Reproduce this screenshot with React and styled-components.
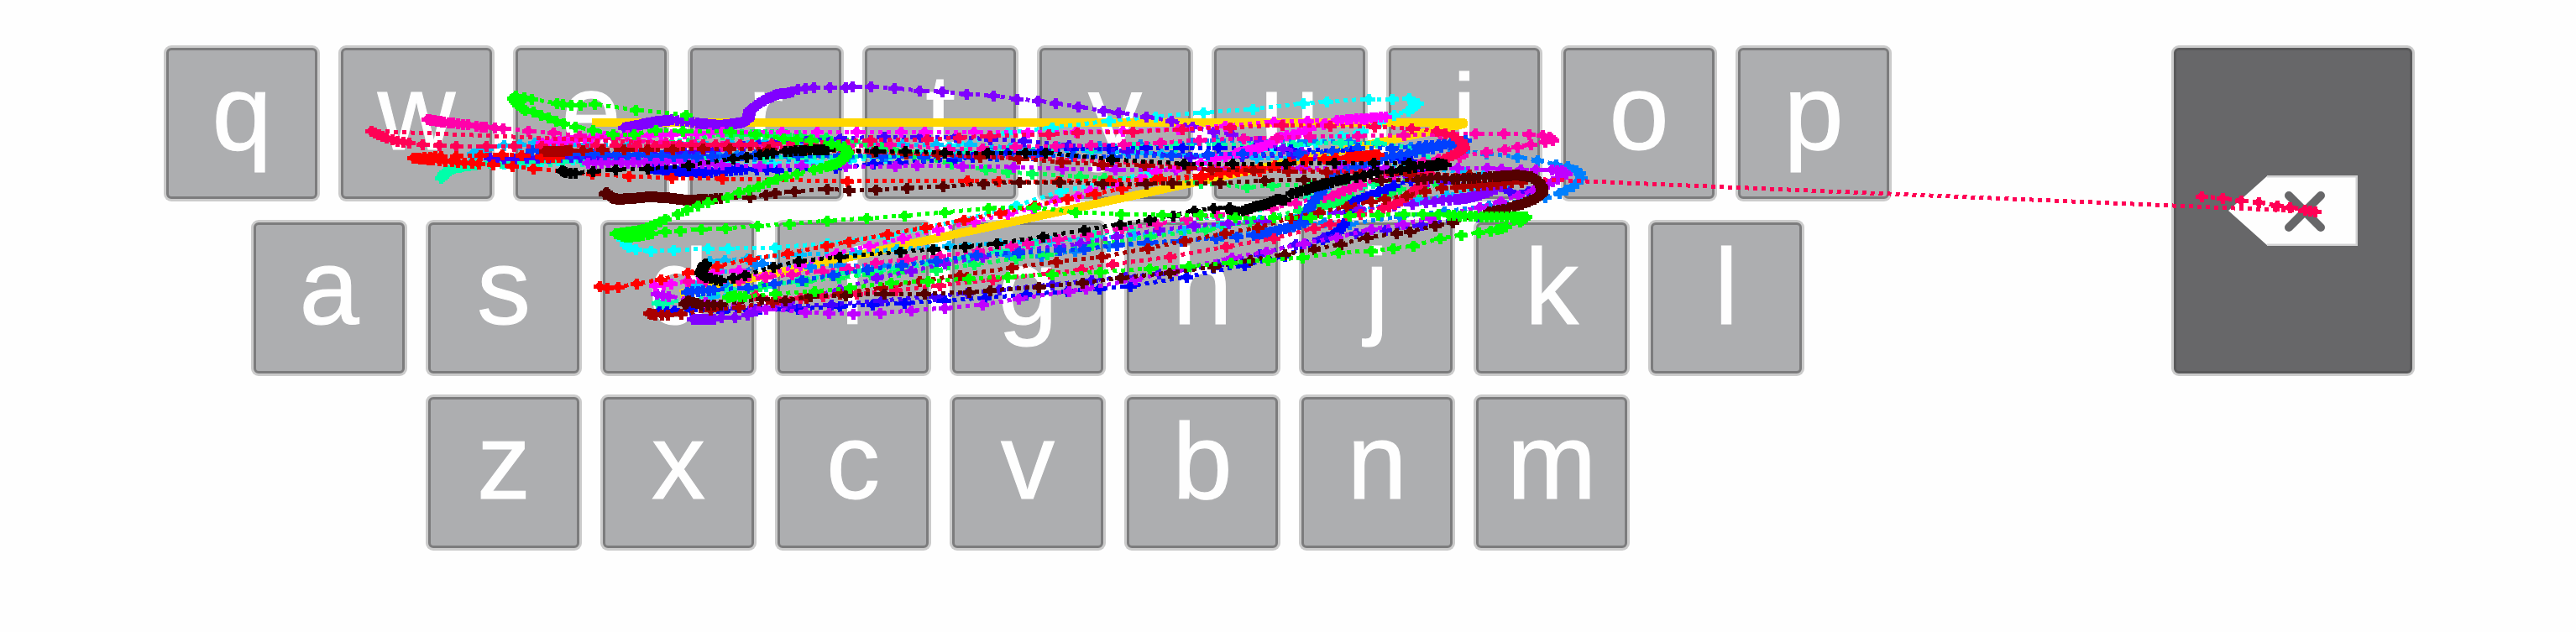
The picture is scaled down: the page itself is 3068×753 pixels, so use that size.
import React from "react";
import styled, { createGlobalStyle } from "styled-components";

const GlobalStyle = createGlobalStyle`
  *, *::before, *::after { box-sizing: border-box; }
  body { margin: 0; background: #fefefe; }
`;

const Board = styled.main`
  position: relative;
  display: flex;
  justify-content: space-between;
  align-items: flex-start;
  min-width: max-content;
  padding: 57px 195px 100px 198px;
  background: #fefefe;
`;

const Keys = styled.div`
  display: flex;
  flex-direction: column;
  gap: 28px;
`;

const Row = styled.div`
  display: flex;
  gap: 28px;
  padding-left: ${(p) => p.$indent}px;
`;

const Key = styled.button`
  display: flex;
  align-items: center;
  justify-content: center;
  width: ${(p) => (p.$tall ? 284 : 180)}px;
  height: ${(p) => (p.$tall ? 388 : 180)}px;
  padding: ${(p) => (p.$tall ? "0" : "0 0 26px")};
  border: 3px solid ${(p) => (p.$tall ? "#59595a" : "#7c7c7d")};
  border-radius: 6px;
  box-shadow: 0 0 0 3px #cbcbcb;
  background: ${(p) => (p.$tall ? "#676769" : "#adaeb0")};
  color: #fefefe;
  font: 128px/148px "Liberation Sans", Arial, sans-serif;
  -webkit-text-stroke: 1px #fefefe;
`;

const Traces = styled.svg`
  position: absolute;
  inset: 0;
  width: 100%;
  height: 100%;
  pointer-events: none;
`;

const BackspaceIcon = () => (
  <svg width="154" height="84" viewBox="0 0 154 84" aria-hidden="true">
    <path d="M0 42L47 0H154V84H47Z" fill="#fefefe" />
    <path d="M46 1H153V83H46" fill="none" stroke="#d2d2d3" strokeWidth="3" />
    <path d="M72 24L110 62M110 24L72 62" stroke="#676769" strokeWidth="10" strokeLinecap="round" />
  </svg>
);

const ROWS = [
  { indent: 0, letters: "qwertyuiop" },
  { indent: 104, letters: "asdfghjkl" },
  { indent: 312, letters: "zxcvbnm" },
];

// Each swipe is a list of touch samples. "x,y*n" adds n evenly spaced samples
// on the way to the point, "x,y!" is a jump without samples between.
const SWIPES = [
  ["#00ffff", "741,285 745,291 748,294 757,297 775,299 802,298 843,296 867,296 923,295 985,290 1057,281 1100,272 1148,262 1210,245 1263,228 1320,217 1370,205 1430,195 1480,184 1517,177 1547,172 1567,170 1597,162 1622,156 1643,145 1660,137 1677,132 1688,123*3 1678,117 1658,118 1630,118 1580,121 1552,123 1492,130 1433,134 1376,139 1321,144 1253,152 1200,158 1130,175 1055,188 968,193 920,195 860,195 760,186 700,189 627,193*4 600,195*3"],
  ["#00bfff", "868,352 848,353 830,340 858,323 845,311 863,310 890,308 953,303 1018,301 1068,297 1130,293 1190,290 1250,287 1350,280 1410,275 1500,262 1620,250 1690,238 1723,233 1760,225 1793,222 1767,208 1743,205 1580,190 1497,188 1383,183 1300,180 1250,179 1155,172 1075,172 1000,168 867,170 750,172 700,173 637,170*3 600,173*2 580,177 563,183*3 565,188"],
  ["#0080ff", "865,340 900,315 908,314 965,318 1000,316 1050,316 1110,311 1200,303 1240,305 1320,293 1410,287 1500,275 1577,265 1607,267 1667,258 1720,252 1773,245 1810,240 1840,235 1857,230 1873,222*2 1883,212*2 1881,206 1877,203 1867,198 1853,196 1831,191 1807,187 1770,183 1743,180 1680,175 1607,169 1557,168 1448,167 1420,170 1358,172 1260,175 1180,182 1100,185 1010,187 960,186 835,185*6 720,188*10 690,186*4"],
  ["#00ffaa", "783,361*2 795,360*2 820,357 870,345 912,341 950,335 1000,325 1067,320*3 1150,307 1230,290 1303,280 1345,272 1376,267 1450,258 1500,246 1560,235 1621,222 1635,218 1660,205 1700,190 1690,178 1640,170 1597,170 1540,172 1450,172 1350,175 1200,180 1050,186 950,187 870,188 760,190 670,192*4 610,193*4 570,195*3 550,198*5 540,200*3 530,205*4 525,212*3"],
  ["#00ff55", "900,345 910,338 960,335 1037,327 1070,324 1115,322 1160,315 1210,308 1247,303 1300,292 1369,282 1436,274 1488,264 1547,251 1570,245*2 1580,243*2 1600,238*4 1610,235*2 1640,231 1655,230 1667,225 1690,228 1715,218 1700,212 1640,216 1562,220 1515,221 1485,223 1430,218 1378,212 1315,212 1286,210 1229,207 1200,205 1174,202 1133,195 1100,188 1050,175*4 1000,165*3 935,160*4 895,160*5 860,160*3 800,170"],
  ["#0000ff", "785,371 803,370*2 823,369 860,371 905,368 950,368 1000,365 1077,361 1173,355 1271,347 1346,341 1413,330 1482,316 1530,305 1575,285 1593,276*3 1600,266*3 1606,252 1612,240*2 1633,232*4 1660,221*3 1680,215 1695,202 1680,192 1667,188*3 1657,187 1610,180 1537,178 1451,176 1365,176 1277,177 1200,182 1137,190*3 1070,194 1040,195 995,200 926,203 888,201*3 840,205*8 800,203*8 775,200*5"],
  ["#4000ff", "860,367 900,368 940,365 990,363 1050,358 1113,353 1190,345 1253,339 1300,334 1380,326 1450,315 1500,303 1543,291 1576,283 1615,278 1650,274 1693,268 1760,258 1810,243 1830,234 1820,228 1798,228 1780,225 1720,217 1640,202 1540,185 1417,187 1343,180 1273,173 1219,168 1138,163 1053,163 1000,165 920,170 850,178*4 780,185*6 680,187*9 600,189*6 583,188*2"],
  ["#8000ff", "825,380 850,380*8 859,378 875,378 890,375 900,370 935,362 1000,345 1044,331 1085,323 1125,314 1170,306 1213,299 1287,290 1330,282 1380,274 1422,269 1463,266 1505,263 1553,257 1593,253 1617,249 1660,245 1682,243 1698,241 1718,238*2 1733,237*2 1745,236*3 1762,232*4 1775,227*3 1787,222*2 1760,220 1700,216 1620,200 1550,181 1528,177 1500,168 1467,160 1445,157 1420,151 1395,144 1365,139 1332,134 1314,132 1284,127 1257,123 1236,120 1211,118 1183,114 1151,112 1122,109 1095,108 1065,105 1037,103 1015,103 1007,104 988,104 969,104 959,105 950,106 943,109 925,112*4 913,117*4 900,125*5 892,132*4 890,142*4 884,145*3 875,147*3 855,149*5 830,146*5 800,142*5 777,145*5 743,152*12"],
  ["#bf00ff", "782,350 796,353*2 820,356 840,360 880,365 912,368 959,372 987,373 1016,374 1048,373 1085,370 1125,367 1170,363 1213,356 1273,347 1293,344 1352,333 1400,322 1467,307 1508,300 1553,290 1592,283 1633,273 1671,267 1703,260 1762,247 1787,240 1808,233 1826,227 1843,219 1855,213*2 1865,207*2 1860,203*2 1848,202*2 1829,202 1811,202 1788,201 1771,200 1736,200 1650,200 1500,200 1400,202 1328,202 1265,201 1207,199 1146,198 1092,197 1066,198 1007,198 955,197 905,198 860,196 795,191*8 740,194*8 700,194*5"],
  ["#ff00ff", "780,340 799,338*2 818,335 850,325 880,322 910,329 996,302 1035,293 1075,284 1117,274 1160,264 1200,255 1230,248 1257,239 1283,234 1298,227 1330,220 1358,213 1376,204 1402,199 1430,194 1447,189 1459,187 1472,182 1487,179*3 1507,173*4 1525,163*3 1547,158*3 1560,153*2 1592,143*2 1650,139*10 1625,142 1592,143 1557,144 1517,145 1459,150 1403,154 1337,156 1224,158 1160,157 1101,157 1073,157 1020,157 973,157 931,157 860,157 800,160*4 720,162*6 680,167*5 645,170*5"],
  ["#ff00aa", "820,335 840,335 880,335 912,330 943,327 980,323 1010,320 1043,313 1080,309 1119,305 1165,299 1205,293 1224,290 1260,285 1295,280 1336,272 1377,267 1413,261 1450,256 1485,251*2 1515,248 1543,242 1567,236 1587,233*2 1600,227*2 1620,220*3 1660,207 1695,192 1713,189 1738,187 1770,181 1792,178 1807,175 1823,172 1840,169 1849,167 1845,163*2 1837,161 1821,160 1791,159 1757,159 1672,161 1617,162 1560,163 1481,165 1428,167 1382,170 1338,172 1299,173 1257,174 1209,175 1130,178 1060,172 960,175 860,174 760,168*3 730,164 690,162 659,158 629,156 599,153 578,151*2 567,150*2 557,148 545,147*2 528,145*3 509,142*9"],
  ["#0040ff", "818,348 850,345*5 890,343 922,338 955,334 992,328 1033,321 1115,311 1163,304 1262,298 1291,297 1330,292 1366,289 1448,284 1473,282 1493,280 1508,277*3 1535,271*5 1553,265*3 1557,253*3 1560,245*2 1572,230*3 1590,210*3 1625,193*3 1650,187*4 1695,180*5 1727,172*3 1745,167*3 1720,171*3 1690,174*4 1657,177 1617,176 1587,180 1547,183 1480,183 1395,185 1325,187 1230,185 1100,187 1000,185 900,184 830,187*4 760,184*5 680,183*6 633,179*4"],
  ["#ff0055", "900,352 927,357 953,355 980,353 1020,350 1067,346 1119,340 1182,333 1250,326 1325,315 1393,306 1460,294 1517,284 1565,272 1584,267 1620,255 1647,248 1661,243*2 1675,234*2 1690,222*4 1696,213*2 1705,200*2 1720,189*3 1733,183*3 1743,176*3 1740,168*2 1730,161*2 1711,156*2 1681,153 1637,151 1584,150 1527,149 1465,152 1408,154 1349,157 1283,158 1249,160 1179,162 1104,166 1037,167 967,170 895,172*3 837,172*4 780,174*4 710,173*3 645,174 612,174 579,174 543,174 523,173 503,172 487,170 473,168*2 460,164*2 450,160*2 442,156*2 2757,252! 2745,250*2 2727,247 2712,245 2690,241 2669,239 2647,236 2622,234"],
  ["#ff0000", "714,341 723,343 736,342 758,338 787,333 819,325 854,317 893,309 938,302 984,293 1011,288 1057,279 1102,271 1148,262 1191,254 1232,245 1271,237 1304,231 1336,225 1382,213 1431,209 1465,205*3 1500,200*4 1535,193*2 1555,190 1577,189 1605,187*2 1620,186*3 1641,184*5 1605,188 1555,192 1500,204 1430,212 1322,215 1260,216! 1189,216! 1152,215 1009,216! 860,213! 800,212! 749,210 705,207 635,201 610,198 587,196 570,195 545,193*3 515,190*4 492,188*9 525,186*5 543,186 572,185 598,184 621,185 645,187 665,187*3"],
  ["#aa0000", "773,373 780,375*3 795,375*2 811,374 846,369 880,366 920,360 960,355 1000,350 1050,343 1095,335 1143,328 1205,319 1258,312 1312,306 1367,296 1411,287 1459,278 1498,271 1537,260 1571,253 1604,246 1633,240 1649,237 1675,233 1697,228 1717,224 1734,223 1752,221*2 1775,220*3 1800,217*3 1812,217 1750,208 1680,208 1620,207 1580,205 1534,204 1493,203 1443,202 1415,200 1363,197 1313,196 1264,193 1213,189 1167,187 1117,184 1040,181 1010,180 960,178 915,178 869,177 837,177 801,178 771,178 743,178 717,178 694,179 679,179 660,180*4 649,180*4"],
  ["#550000", "815,362 820,358*3 835,363*3 858,363*3 907,356 935,358 965,353 1007,352 1053,350 1101,350 1154,348 1179,346 1237,342 1289,337 1335,331 1393,325 1445,318 1489,310 1530,303 1565,297 1597,291 1628,283 1663,278 1679,276 1709,269 1730,265 1773,252 1790,249*3 1803,245*2 1820,240*4 1830,235*3 1836,230*3 1836,223*3 1832,216*3 1823,210*4 1807,208*4 1780,210*6 1730,213*8 1712,211*2 1688,214*3 1645,215 1553,214! 1506,215 1453,218 1396,218 1365,219 1313,219 1262,217 1214,217 1171,219 1123,222 1080,224 1043,226 1011,227 985,225 946,228 923,230 912,232 893,235 858,236 840,237*3 815,238*6 795,235*5 770,234*5 750,236*4 735,237*5 728,235*3 722,229*3 720,231*2"],
  ["#000000", "840,314 838,316*2 834,325*4 840,330*3 858,334*3 887,328*2 921,318 951,311 1000,306 1072,300 1149,294 1187,290 1242,282 1291,274 1334,267 1369,262 1397,257 1422,251 1445,248 1464,247 1467,252*2 1480,251*2 1493,246*3 1510,242*4 1520,237*3 1530,238*3 1538,230 1555,226*3 1565,222*3 1580,218*4 1592,215*2 1605,212*3 1624,209*2 1640,205*2 1657,204 1678,200*2 1700,197*3 1721,196*6 1712,194*2 1678,194 1636,194 1589,194 1531,195! 1468,195! 1410,195! 1324,190! 1245,182! 1221,182 1176,182 1125,182 1078,180 1043,180 985,178 970,178*3 935,180*6 920,182 905,184*2 873,189*2 820,197 771,201 733,202 706,204 685,206 673,205*2 669,203*2"],
  ["#00ff00", "867,354 875,352*3 887,353*2 923,350 970,347 1012,343 1061,337 1105,335 1154,332 1200,330 1253,327 1310,324 1369,320 1416,317 1466,313 1510,310 1551,307 1594,301 1633,299 1659,296 1683,293 1715,284 1740,280 1761,277 1775,275 1783,273 1793,270*2 1810,264 1817,258*3 1800,258*5 1770,258*5 1725,256*7 1713,255 1694,255 1672,255 1641,256 1607,257 1561,259 1517,259 1471,259 1430,256 1384,256 1335,255 1281,253 1232,247 1177,248 1125,253 1077,257 1032,260 985,263 940,267 902,269 864,272 835,273 810,275 792,276 776,278 760,281*3 745,282*5 733,278*3 750,276*5 765,273*4 780,267*3 792,261*2 807,255 818,250 831,245 843,241 866,235 880,229 892,226 903,222 915,217 925,213 936,210 949,207 969,202 984,198*2 995,195*3 1003,190*3 1009,182*3 1005,175*3 990,171*2 965,167 933,165*2 900,160 870,157 813,156 781,155 755,160 730,160 706,155 685,151 671,147 653,140*2 635,133*2 625,131 617,125*3 611,117*3 614,114*2 633,118*2 663,123 670,124 680,125 691,125 708,124 757,131 817,137"],
];

function expand(text) {
  const out = [];
  text.split(" ").forEach((item) => {
    const [, xs, ys, steps, jump] = item.match(/^(\d+),(\d+)(?:\*(\d+))?(!)?$/);
    const x = Number(xs);
    const y = Number(ys);
    const last = out[out.length - 1];
    if (!last) {
      out.push([x, y]);
      return;
    }
    const [px, py] = last;
    const gap = Math.hypot(x - px, y - py);
    const n = jump ? 1 : Number(steps) || Math.max(1, Math.round(gap / 50));
    for (let i = 1; i <= n; i += 1) {
      out.push([Math.round(px + ((x - px) * i) / n), Math.round(py + ((y - py) * i) / n)]);
    }
  });
  return out;
}

const CROSS = "m-7 -2h3l2 -2v-2h4v2l2 2h3v4h-3l-2 2v2h-4v-2l-2 -2h-3z";

const Swipe = ({ color, samples }) => {
  const points = expand(samples);
  return (
    <g stroke={color}>
      <polyline
        points={points.map((p) => p.join(",")).join(" ")}
        fill="none"
        strokeWidth="5"
        strokeDasharray="5 5"
      />
      <path d={points.map(([x, y]) => `M${x} ${y}${CROSS}`).join("")} fill={color} strokeWidth="1" />
    </g>
  );
};

export default function App() {
  return (
    <>
      <GlobalStyle />
      <Board>
        <Keys>
          {ROWS.map((row) => (
            <Row key={row.letters} $indent={row.indent}>
              {row.letters.split("").map((letter) => (
                <Key key={letter} type="button">{letter}</Key>
              ))}
            </Row>
          ))}
        </Keys>
        <Key type="button" $tall aria-label="Backspace">
          <BackspaceIcon />
        </Key>
        <Traces shapeRendering="crispEdges" aria-hidden="true">
          <polyline points="810,350 1743,148 1743,146 705,146" fill="none" stroke="#ffd700" strokeWidth="10" strokeLinejoin="round" />
          {SWIPES.map(([color, samples]) => (
            <Swipe key={color} color={color} samples={samples} />
          ))}
        </Traces>
      </Board>
    </>
  );
}
